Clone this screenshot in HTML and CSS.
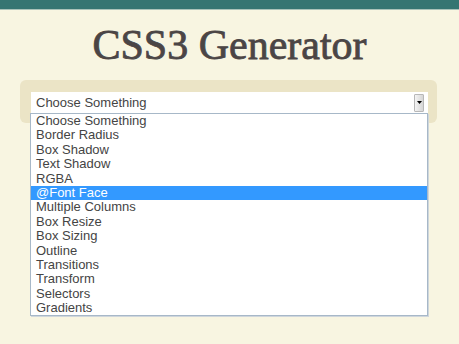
FILE: index.html
```html
<!DOCTYPE html>
<html lang="en">
  <head>
    <meta charset="UTF-8" />
    <meta name="viewport" content="width=device-width, initial-scale=1.0" />
    <title>CSS3 Generator</title>
    <link rel="stylesheet" href="styles.css">
  </head>
  <body>
    <div class="topbar"></div>
    <h1>CSS3 Generator</h1>
    <div class="panel">
      <div class="dropdown">
        <div class="select">
          <span>Choose Something</span>
          <span class="arrow"><svg width="5" height="3" viewBox="0 0 5 3"><path d="M0 0H5L2.5 3Z" fill="#000"/></svg></span>
        </div>
        <ul class="options">
          <li>Choose Something</li>
          <li>Border Radius</li>
          <li>Box Shadow</li>
          <li>Text Shadow</li>
          <li>RGBA</li>
          <li class="active">@Font Face</li>
          <li>Multiple Columns</li>
          <li>Box Resize</li>
          <li>Box Sizing</li>
          <li>Outline</li>
          <li>Transitions</li>
          <li>Transform</li>
          <li>Selectors</li>
          <li>Gradients</li>
        </ul>
      </div>
    </div>
  </body>
</html>
```

FILE: styles.css
```css
body {
  margin: 0;
  min-height: 344px;
  background: #f8f5e1;
  font-family: "Liberation Sans", Arial, sans-serif;
  color: #4a4444;
}
.topbar {
  height: 9px;
  background: #357572;
  border-bottom: 1px solid #a9c2b9;
}
h1 {
  margin: 0;
  height: 70px;
  line-height: 70px;
  text-align: center;
  font-family: "Liberation Serif", "Times New Roman", serif;
  font-weight: normal;
  font-size: 42px;
  color: #4b4545;
  -webkit-text-stroke: 0.8px #4b4545;
}
.panel {
  margin: 0 22px 0 20px;
  height: 43px;
  padding: 12px 9px 0 11px;
  box-sizing: border-box;
  background: #ebe4c6;
  border-radius: 6px;
}
.dropdown {
  position: relative;
}
.select {
  height: 21px;
  background: #fff;
  display: flex;
  align-items: center;
  justify-content: space-between;
  padding: 0 4px 0 5px;
  font-size: 13px;
  color: #444;
}
.arrow {
  width: 8px;
  height: 16px;
  border: 1px solid #b8b8b8;
  border-radius: 1px;
  background: linear-gradient(to right, #f4f4f4, #d6d6d6);
  display: flex;
  align-items: center;
  justify-content: center;
}
.options {
  position: absolute;
  left: -1px;
  top: 21px;
  width: 396px;
  margin: 0;
  padding: 0;
  list-style: none;
  background: #fff;
  border: 1px solid #a7b8c8;
  box-shadow: 1px 1px 0 #cfd6dc;
}
.options li {
  height: 14.4px;
  line-height: 14.4px;
  padding-left: 5px;
  font-size: 13px;
  color: #444;
}
.options .active {
  background: #3399ff;
  color: #fff;
}
```
